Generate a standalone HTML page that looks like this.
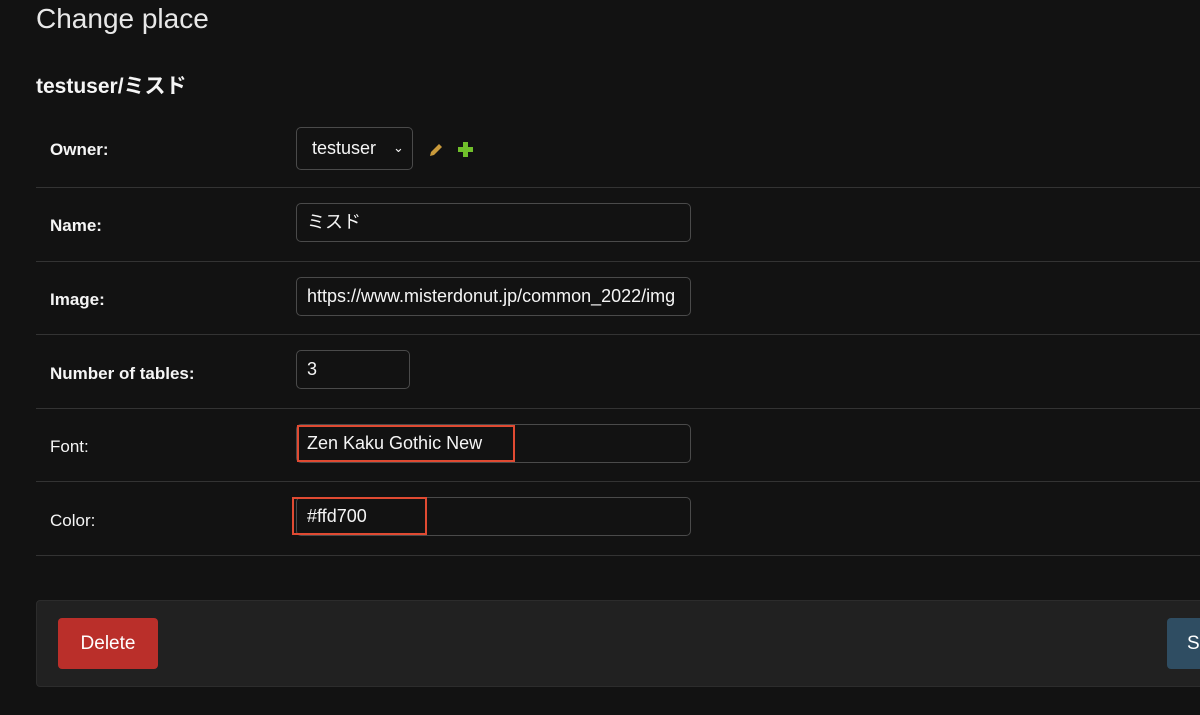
<!DOCTYPE html>
<html><head><meta charset="utf-8"><style>
body{margin:0;width:1200px;height:715px;overflow:hidden;background:#121212;color:#f5f5f5;font-family:"Liberation Sans","Noto Sans CJK JP",sans-serif;position:relative}
.a{position:absolute}
h1{position:absolute;left:36px;top:3px;margin:0;font-weight:400;font-size:28px;color:#e8e8e8}
h2{position:absolute;left:36px;top:70px;margin:0;font-size:21px;font-weight:700}
.lbl{position:absolute;left:50px;font-size:17px}
.b{font-weight:700}
.hr{position:absolute;left:36px;right:0;height:1px;background:#333}
.inp{position:absolute;border:1px solid #4a4a4a;border-radius:5px;background:#121212;font-size:18px;box-sizing:border-box;padding-left:10px;white-space:nowrap;overflow:hidden}
.red{position:absolute;border:2px solid #e04a32}
</style></head><body>
<h1>Change place</h1>
<h2>testuser/ミスド</h2>
<div class="lbl b" style="top:140px">Owner:</div>
<div class="inp" style="left:296px;top:127px;width:117px;height:43px;line-height:41px;padding-left:15px">testuser<span style="position:absolute;left:96px;top:-1px;font-size:13px">&#8964;</span></div>
<svg class="a" style="left:427px;top:141px" width="18" height="18" viewBox="0 0 18 18"><path d="M3 15 L4 11 L12 3 L15 6 L7 14 Z" fill="#c99a3b"/></svg>
<svg class="a" style="left:457px;top:141px" width="17" height="17" viewBox="0 0 17 17"><path d="M6 1h5v5h5v5h-5v5H6v-5H1V6h5z" fill="#70bf2b"/></svg>
<div class="hr" style="top:187px"></div>
<div class="lbl b" style="top:216px">Name:</div>
<div class="inp" style="left:296px;top:203px;width:395px;height:39px;line-height:37px">ミスド</div>
<div class="hr" style="top:261px"></div>
<div class="lbl b" style="top:290px">Image:</div>
<div class="inp" style="left:296px;top:277px;width:395px;height:39px;line-height:37px">https://www.misterdonut.jp/common_2022/img</div>
<div class="hr" style="top:334px"></div>
<div class="lbl b" style="top:364px">Number of tables:</div>
<div class="inp" style="left:296px;top:350px;width:114px;height:39px;line-height:37px">3</div>
<div class="hr" style="top:408px"></div>
<div class="lbl" style="top:437px">Font:</div>
<div class="inp" style="left:296px;top:424px;width:395px;height:39px;line-height:37px">Zen Kaku Gothic New</div>
<div class="red" style="left:297px;top:425px;width:214px;height:33px"></div>
<div class="hr" style="top:481px"></div>
<div class="lbl" style="top:511px">Color:</div>
<div class="inp" style="left:296px;top:497px;width:395px;height:39px;line-height:37px">#ffd700</div>
<div class="red" style="left:292px;top:497px;width:131px;height:34px"></div>
<div class="hr" style="top:555px"></div>
<div class="a" style="left:36px;top:600px;width:1170px;height:87px;background:#212121;border:1px solid #2c2c2c;border-radius:4px;box-sizing:border-box"></div>
<div class="a" style="left:58px;top:618px;width:100px;height:51px;background:#ba2f2a;border-radius:4px;text-align:center;line-height:51px;font-size:19px;color:#fff">Delete</div>
<div class="a" style="left:1167px;top:618px;width:60px;height:51px;background:#2f4d62;border-radius:4px;line-height:51px;font-size:19px;color:#fff;padding-left:20px;box-sizing:border-box">Save</div>
</body></html>
